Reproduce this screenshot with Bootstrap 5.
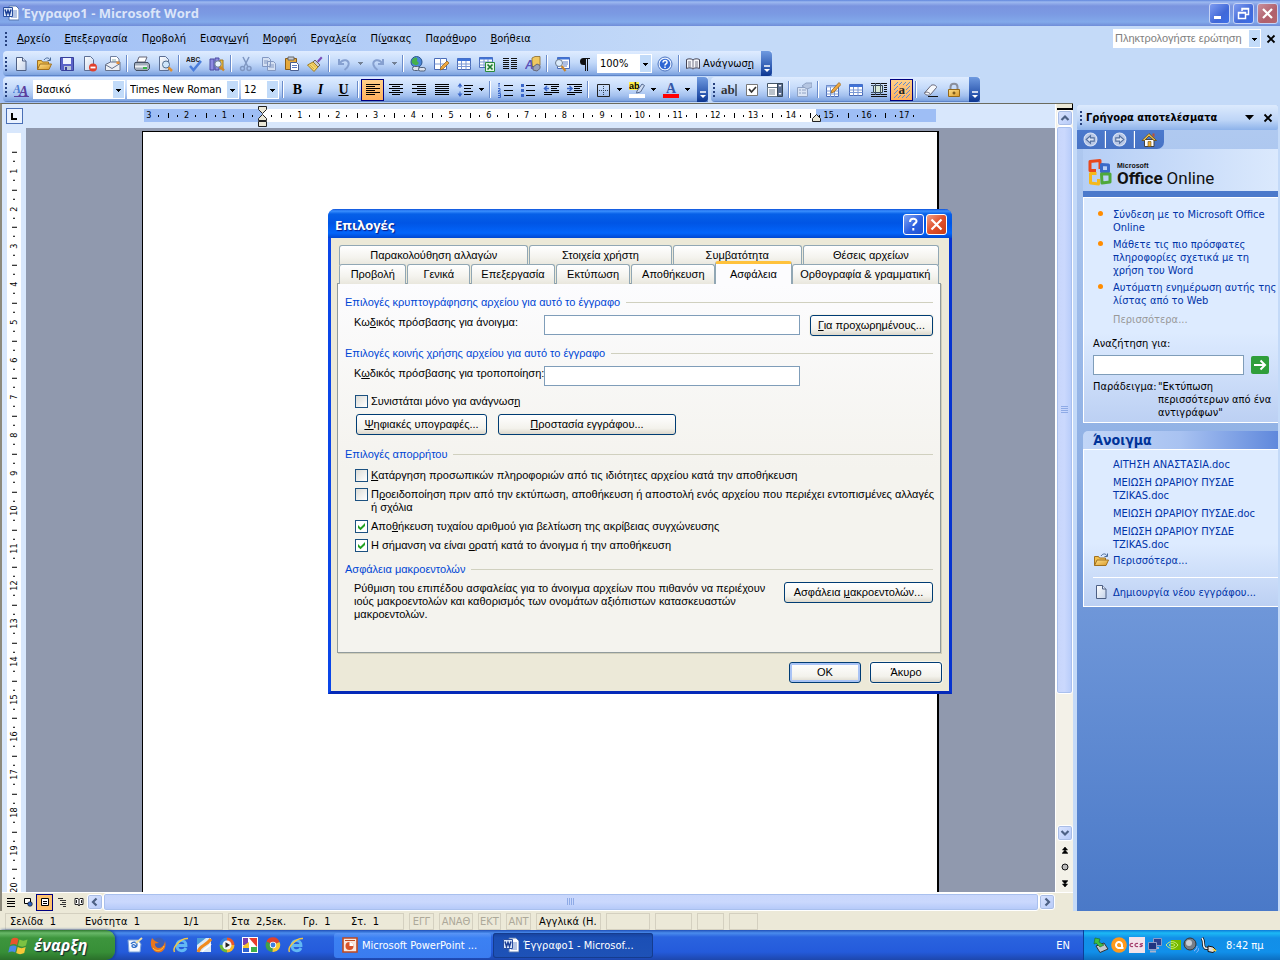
<!DOCTYPE html>
<html lang="el">
<head>
<meta charset="utf-8">
<meta name="viewport" content="width=device-width, initial-scale=1">
<title>Έγγραφο1 - Microsoft Word</title>
<link href="https://cdn.jsdelivr.net/npm/bootstrap@5.3.0/dist/css/bootstrap.min.css" rel="stylesheet">
<style>
:root{--ui:"DejaVu Sans Condensed","DejaVu Sans",sans-serif;--face:#ece9d8}
body{font:11px/13px var(--ui);color:#000;height:100vh;min-height:600px;background:#c4daf8}
button,input,select{font:inherit;color:inherit}
button{padding:0;border:0;background:none}
a{color:inherit;text-decoration:none}
u{text-underline-offset:1px}
.ico{width:16px;height:16px;display:block;flex:none}
.cap-title{font:bold 13px/16px "Open Sans","Noto Sans",sans-serif}

/* title bar */
.titlebar{height:26px;background:linear-gradient(#5f86dc,#9db9f0 2px,#7a94df 6px,#7b9ae3 14px,#82a9ea 22px,#6f8cd8);color:#dbe5f9;padding:0 2px 0 3px;gap:3px}
.winbtn{width:21px;height:21px;border:1px solid #c6d3f5;border-radius:3px;background:linear-gradient(135deg,#7f9cf0,#4068d8 60%,#3c6fe8)}
.winbtn.close-dim{background:linear-gradient(135deg,#c98f9b,#b0606c 60%,#b5656c)}
.winbtn.close-red{background:linear-gradient(135deg,#f0a088,#e0502c 50%,#c93c14);border-color:#fff}
.winbtn.help{background:linear-gradient(135deg,#7fa4f4,#2c5fe0 55%,#2052d0);border-color:#fff}

/* menus and toolbars */
.menubar{height:25px;background:linear-gradient(90deg,#a0bff5,#c4daf8 55%);padding-left:3px}
.menubar .menu{padding-left:1px}
.menubar .menu a{padding:0 7px}
.grip{width:6px;height:18px;flex:none;background:radial-gradient(circle at 3px 3px,#27417e 1px,transparent 1px) 0 0/6px 4px}
.toolrow{height:26px;background:linear-gradient(90deg,#a0bff5,#c4daf8 55%);padding-left:3px;gap:3px}
.bar{height:25px;background:linear-gradient(#dfecff,#c4dafa 45%,#a3c0ef 75%,#7da3df 95%,#4a70b8);border-radius:4px 0 0 4px}
.tb{width:23px;height:22px;display:flex;align-items:center;justify-content:center;flex:none}
.tb.on{background:linear-gradient(#ffd08a,#ffb05c);border:1px solid #000080}
.tb.txt{width:75px;gap:2px}
.tb.closedoc{width:18px}
.arr{width:11px;height:22px;flex:none}
.sep{width:2px;height:17px;margin:0 2px;flex:none;background:linear-gradient(90deg,#6a8ccb 50%,#fff 50%)}
.endcap{width:11px;align-self:stretch;border-radius:0 4px 4px 0;background:linear-gradient(#6f9ae0,#2a56ae 70%,#0c3590);display:flex;align-items:flex-end;justify-content:center;flex:none;padding-bottom:2px}
.tri{background:linear-gradient(#000,#000) 50% 9px/5px 1px no-repeat,linear-gradient(#000,#000) 50% 10px/3px 1px no-repeat,linear-gradient(#000,#000) 50% 11px/1px 1px no-repeat}
.tri.dim{opacity:.4}
.combo{appearance:none;height:19px;border:1px solid #fff;border-radius:0;padding:0 0 0 2px;margin:0 1px;background:linear-gradient(#000,#000) right 3px top 8px/5px 1px no-repeat,linear-gradient(#000,#000) right 4px top 9px/3px 1px no-repeat,linear-gradient(#000,#000) right 5px top 10px/1px 1px no-repeat,linear-gradient(#c2dbf9,#c2dbf9) right/11px 100% no-repeat,#fff;font-size:11px;flex:none}
.w55{width:55px}.w92{width:92px}.w112{width:112px}.w38{width:38px}
.combo.ask{width:148px;color:#808080;padding-left:1px;font-family:"Liberation Sans",sans-serif}
.serif{font:bold 14px/18px "Liberation Serif",serif}

/* document area */
.docarea{border-top:1px solid #6b6b5e;border-left:2px solid #8d8a7c;background:#d8e7fc;min-width:0}
.ruler{height:24px;padding-bottom:1px}
.tabsel{width:17px;height:16px;border:1px solid #4a6fb5;background:#eaf2ff;margin-left:4px}
.scale{width:793px;margin-left:107px;height:13px;font-size:9px;line-height:13px;background:linear-gradient(90deg,#d8e7fc 14px,#9ebef5 14px,#9ebef5 132px,#fff 132px,#fff 686px,#9ebef5 686px);box-shadow:13px 0 0 #9ebef5}
.scale span{flex:1 1 0;text-align:center;background:linear-gradient(#000,#000) 0 4px/1px 5px no-repeat,linear-gradient(#000,#000) 25% 6px/1px 2px no-repeat,linear-gradient(#000,#000) 75% 6px/1px 2px no-repeat}
.scale span:first-child{background-size:0 0,0 0,1px 2px}
.mark-l{left:127px;top:-4px}
.mark-r{left:681px;top:4px}
.vruler{width:24px;padding:5px 0 0 5px;overflow:hidden}
.vscale{width:14px;height:793px;background:#fff}
.vscale span{flex:1 1 0;writing-mode:vertical-rl;transform:rotate(180deg);text-align:center;line-height:14px;font-size:9px;background:linear-gradient(#000,#000) 4px 100%/5px 1px no-repeat,linear-gradient(#000,#000) 6px 25%/2px 1px no-repeat,linear-gradient(#000,#000) 6px 75%/2px 1px no-repeat}
.vscale .half{flex:.5 1 0;background:none}
.canvas{background:#9099ae;overflow:hidden}
.sheet{width:797px;margin:3px 0 0 116px;background:#fff;border:1px solid #000;border-right-width:2px;border-bottom:0}
.vscroll{width:18px;background:#f3f1e8;border-left:1px solid #fff}
.sbtn{width:16px;height:16px;flex:none;border:1px solid #fff;border-radius:3px;background:linear-gradient(135deg,#dbe5ff,#b5c9f8);box-shadow:0 0 0 1px #a9bde6 inset;display:flex;align-items:center;justify-content:center}
.thumb{border:1px solid #fff;border-radius:3px;background:linear-gradient(90deg,#c8d6fb,#cad8fd 50%,#b6cbf9);box-shadow:0 0 0 1px #a9c0ee inset}
.thumb.v{flex:568 1 0}
.track{flex:132 1 0}
.thumb.h{background:linear-gradient(#c8d6fb,#cad8fd 50%,#b3c8f8)}
.splitter{width:16px;height:6px;background:var(--face);border:1px solid #000;border-width:0 1px 2px 0}
.hrow{height:19px;background:var(--face);border-top:1px solid #fff;padding-right:18px}
.view{width:17px;height:17px;display:flex;align-items:center;justify-content:center}
.view.on{background:#ffc36e;border:1px solid #000080}
.nav-s{width:16px;height:17px;display:flex;align-items:center;justify-content:center}

/* task pane */
.pane{width:207px;border-left:4px solid #c4daf8;border-right:2px solid #c4daf8;background:linear-gradient(#b2cbf1,#8fb0e4 45%,#6f97d9 62%,#4a79c8);flex:none;margin-top:2px;white-space:nowrap}
.panehead{height:25px;background:linear-gradient(#dceafd,#bed5f7 60%,#8db2ea);border-radius:2px;font-weight:bold;padding:0 5px 0 1px}
.headtext{padding-left:2px}
.panenav{width:87px;height:19px;background:linear-gradient(#4b79cd,#4672c4);border-radius:0 0 7px 0;padding-left:6px;gap:4px}
.logo{height:48px;background:linear-gradient(90deg,#b5cef5,#dbe9fd);margin-left:6px;border-bottom:6px solid #4b79cb;padding:9px 0 0 4px}
.logotext{padding-left:4px;padding-top:4px;color:#111}
.logo .of{font:bold 17px/18px Roboto,sans-serif}
.logo .on{font:17px/18px Roboto,sans-serif}
.logo .ms{font:bold 7px/7px "Liberation Sans",sans-serif}
.sect{margin-left:6px;border:1px solid #fff;border-right:0;background:linear-gradient(#ddebff 60%,#bcd0f3)}
.sect.online{padding:10px 9px 3px}
.sect.recent{padding:8px 0 6px 9px}
.links{color:#0033a8}
.sect ul{padding-left:20px;margin:0}
.bul li{position:relative;margin-bottom:4px}
.bul li::before{content:"";position:absolute;left:-15px;top:3px;width:5px;height:5px;border-radius:50%;background:#ff8c00}
.more{padding:2px 0 11px 20px;color:#999}
.find{height:20px;border:1px solid #7f9db9;background:#fff;width:153px}
.gap7{gap:7px}
.exlab{width:65px;flex:none}
.opentitle{margin:8px 0 0 6px;height:18px;background:linear-gradient(90deg,#c2d6f7,#a8c2f1 50%,#5f88dc);border-radius:5px 0 0 0;color:#003399;font:bold 14px/19px "DejaVu Sans Condensed",sans-serif;padding-left:10px}
.recent li+li{margin-top:5px}
.filelink{gap:4px;padding-top:1px}
.filelink+.filelink{margin-top:9px;padding-top:6px;border-top:1px solid #fff}

/* status bar */
.status{height:19px;background:var(--face);padding:1px 0 0 5px;gap:5px}
.cell{height:17px;border:1px solid #d4d0c0;line-height:16px;padding:0 4px;flex:none;white-space:pre}
.cell.off{color:#aca899;padding:0;text-align:center}
.cell.pos{padding-left:2px}
.cell.lang{width:65px;padding:0 2px}
.w218{width:218px}.w176{width:176px}.w75{width:75px}.w98{width:98px}.w48{width:48px}
.w25{width:25px}.w34{width:34px}.w23{width:23px}.w44{width:44px}.w37{width:37px}.w27{width:27px}.w29{width:29px}

/* taskbar */
.taskbar{height:30px;background:linear-gradient(#1f4fb8,#4a8cec 3px,#2a63df 7px,#245bdb 22px,#1d47ad);color:#fff}
.start{width:115px;height:30px;background:linear-gradient(#2f7a2f,#68b868 3px,#3d953d 8px,#378f37 22px,#2a6f2a);border-radius:0 9px 9px 0;box-shadow:1px 0 3px #123b8c;padding-left:8px;gap:4px;font:italic bold 16px/20px "Open Sans",sans-serif;text-shadow:1px 1px 1px #123}
.quick{padding-left:8px}
.tasks{padding-left:27px;gap:2px}
.task{height:25px;border-radius:3px;background:linear-gradient(#5b96f5,#3c81f3 5px,#3a7cf0);padding-left:8px;gap:4px;color:#fff;white-space:nowrap;text-align:left}
.task.on{background:linear-gradient(#17429c,#1b4fb5 5px,#1e52b7);box-shadow:0 0 0 1px #153c8e inset;padding-left:10px}
.w157{width:157px}.w160{width:160px}
.lang-ind{padding-right:13px}
.tray{width:197px;background:linear-gradient(#0d7ad8,#1cb9f5 3px,#128fe8 8px,#1190ea 22px,#0c6ec0);border-left:1px solid #0b3f99;padding-left:9px;gap:2px}
.clock{padding-left:7px}

/* options dialog */
.dlg{top:209px;width:624px;background:var(--face);border:3px solid #0831d9;border-top:0;border-radius:8px 8px 0 0;border-color:#0a46e8 #0633d0 #0429b8 #0a46e8;font-family:"Liberation Sans",sans-serif}
.dlghead{height:29px;margin:0 -3px;padding:2px 5px 0 7px;border-radius:7px 7px 0 0;background:linear-gradient(#0a4fd8,#3b90ff 2px,#0660e8 5px,#0055e5 14px,#0265fb 24px,#0047d0);color:#fff;text-shadow:1px 1px 1px #0a1883;gap:2px}
.tabs{margin:-1px 10px 0 8px;gap:1px}
.tabs.back{margin-top:7px}
.tab{height:20px;border:1px solid #91a7b4;border-bottom:0;border-radius:3px 3px 0 0;background:linear-gradient(#fff,#f4f3ee 60%,#e9e7dd);text-align:center;line-height:19px;white-space:nowrap}
.tab.on{height:23px;margin:-3px -1px 0;border-top:3px solid #ffc23c;background:#fcfcfe;position:relative}
.f62{flex:62 1 0}.f67{flex:67 1 0}.f74{flex:74 1 0}.f76{flex:76 1 0}.f84{flex:84 1 0}.f129{flex:129 1 0}.f136{flex:136 1 0}.f142{flex:142 1 0}.f149{flex:149 1 0}.f190{flex:190 1 0}
.panel{margin:-1px 8px 0 6px;border:1px solid #919b9c;background:linear-gradient(#fcfcfe,#f4f3ee 50%);height:370px;padding:11px 7px 0 7px;box-shadow:1px 1px 0 #d0ceba;white-space:nowrap}
.lg{color:#0046d5;display:flex;align-items:center;gap:6px;font-size:11px;line-height:14px;margin:10px 0 0}
.lg:first-child{margin-top:0}
.lg.far{margin-top:12px}
.lg::after{content:"";flex:1;height:1px;background:#d0d0bf}
.fld{padding-left:9px}
.pw{height:20px;border:1px solid #7f9db9;background:#fff;width:256px;border-radius:0}
.lab{width:190px;padding-top:1px}
.xp{height:21px;border:1px solid #003c74;border-radius:3px;background:linear-gradient(#fff,#f3f2ec 70%,#dcd8cc);box-shadow:0 0 0 1px #f6f4ea;white-space:nowrap}
.xp.def{box-shadow:0 0 0 2px #a9c3f5 inset}
.w123{width:123px}.w131{width:131px}.w178{width:178px}.w149{width:149px}.w72{width:72px}
.ck{appearance:none;width:13px;height:13px;border:1px solid #1c5180;background:linear-gradient(135deg,#dcdcd7,#fff);flex:none;margin:0}
.ck:checked{background:url("data:image/svg+xml,%3Csvg xmlns='http://www.w3.org/2000/svg' viewBox='0 0 11 11'%3E%3Cpath d='M2 4l2.500 2.500L9 2v3L4.500 9.300 2 7z' fill='%2321a121'/%3E%3C/svg%3E") center/11px 11px,#fff}
.ckrow{display:flex;gap:3px;padding-left:10px;margin-top:6px}
.ckrow.first{margin-top:9px}
.lg+.ckrow{margin-top:8px}
.btnpair{padding-left:11px;gap:11px}
.dlgfoot{gap:9px;padding:9px 7px 8px}
.g5{margin-top:5px}.g6{margin-top:6px}
</style>
</head>
<body class="d-flex flex-column overflow-hidden position-relative">

<svg width="0" height="0" class="position-absolute" aria-hidden="true">
<defs>
<linearGradient id="gp" x2="1" y2="1"><stop stop-color="#fff"/><stop offset="1" stop-color="#c5d3ea"/></linearGradient>
<linearGradient id="gy" x2="1" y2="1"><stop stop-color="#ffe08a"/><stop offset="1" stop-color="#d99a2b"/></linearGradient>
<symbol id="i-word" viewBox="0 0 16 16"><path d="M6 1h7l3 3v11H6z" fill="#fff" stroke="#5878b0"/><path d="M10 6h4M10 8h4M10 10h4M8 12h6" stroke="#6a8ac8"/><path d="M.5 2.500h9v9h-9z" fill="#dce8fb" stroke="#2a4fa0"/><path d="M2 4.500l1.500 5L5 5.500l1.500 4L8 4.500" fill="none" stroke="#1c3f95" stroke-width="1.500"/></symbol>
<symbol id="i-new" viewBox="0 0 16 16"><path d="M3.500 1.500h6l3.500 3.500v9.500H3.500z" fill="url(#gp)" stroke="#4d5f84"/><path d="M9.500 1.500V5H13" fill="#dfe8f8" stroke="#4d5f84"/></symbol>
<symbol id="i-open" viewBox="0 0 16 16"><path d="M1.500 13.500v-9h4l1 1.500h6v2" fill="#f2c14e" stroke="#a07020"/><path d="M1.500 13.500L4 8h11.500L13 13.500z" fill="url(#gy)" stroke="#a07020"/><path d="M8 4c2-3 5-2.500 6 0M14.500 1.500V4.500H11.500" fill="none" stroke="#4a6a98"/></symbol>
<symbol id="i-save" viewBox="0 0 16 16"><path d="M1.500 1.500h13v13h-12l-1-1z" fill="#5a62c8" stroke="#37409a"/><path d="M4 2h8v6H4z" fill="#eef2ff"/><path d="M5 10h7v4H5z" fill="#b8c4d8"/><path d="M6 11h2v3H6z" fill="#37409a"/></symbol>
<symbol id="i-perm" viewBox="0 0 16 16"><path d="M2.500.500h6l3 3v11h-9z" fill="url(#gp)" stroke="#5d6f94"/><circle cx="11" cy="11.500" r="4" fill="#e0402c"/><path d="M8.500 11.500h5" stroke="#fff" stroke-width="1.800"/></symbol>
<symbol id="i-mail" viewBox="0 0 16 16"><path d="M5.500.500h6l2.500 2.500v6H5.500z" fill="#fff" stroke="#7080a0"/><path d="M7 4h4M7 6h5" stroke="#8aa"/><path d="M.500 8.500l5-2.500h9.500v8.500H.500z" fill="#eceff5" stroke="#66728c"/><path d="M1 9l6 3.500 8-5" fill="none" stroke="#66728c"/><path d="M11.500 5.500h3v2.500h-3z" fill="#e8913a"/></symbol>
<symbol id="i-print" viewBox="0 0 16 16"><path d="M5 1h8l-2 5H3z" fill="#fff" stroke="#667"/><path d="M1 6.500h13l1.500 2v4l-2 2H2l-1.500-2V8z" fill="#a3adbb" stroke="#445064"/><path d="M1 9.500h12v2H1z" fill="#eef1f5"/><path d="M9 11h4v2H9z" fill="#39b54a"/></symbol>
<symbol id="i-prev" viewBox="0 0 16 16"><path d="M2.500.500h6l3 3v11h-9z" fill="url(#gp)" stroke="#5d6f94"/><circle cx="9" cy="8.500" r="3.500" fill="#cfe6fb" stroke="#55708f"/><path d="M11.500 11.500L15 15" stroke="#e09030" stroke-width="2.500"/></symbol>
<symbol id="i-spell" viewBox="0 0 16 16"><text x="0" y="6" font-size="6.500" font-weight="bold" font-family="Liberation Sans" fill="#222">ABC</text><path d="M4 10l3.500 4L15 5" fill="none" stroke="#4a7ddb" stroke-width="2.500"/></symbol>
<symbol id="i-res" viewBox="0 0 16 16"><path d="M1 3h4v11H1zM6 2h4v12H6z" fill="#8d8ae0" stroke="#4a4aa0"/><path d="M11 4h3v9h-3z" fill="#f0c040" stroke="#a07820"/><circle cx="9" cy="8" r="3.200" fill="#e8f3fd" stroke="#6a7a90"/><path d="M11 10.500l4 4" stroke="#d08828" stroke-width="2.400"/></symbol>
<symbol id="i-cut" viewBox="0 0 16 16"><g fill="none" stroke="#7f97c2" stroke-width="1.500"><path d="M5 1l5 10M11 1L6 11"/><circle cx="4.500" cy="12.500" r="2"/><circle cx="11" cy="12.500" r="2"/></g></symbol>
<symbol id="i-copy" viewBox="0 0 16 16"><g fill="#d5e0f2" stroke="#8398c2"><path d="M1.500 1.500h6l2 2v7h-8zM6.500 5.500h6l2 2v7h-8z"/><path d="M3 5h4M3 7h3M8 9h5M8 11h5"/></g></symbol>
<symbol id="i-paste" viewBox="0 0 16 16"><path d="M1.500 2.500h11v11h-11z" fill="#e5a93c" stroke="#8a5c18"/><path d="M4 1h6v3H4z" fill="#c8ccd4" stroke="#666"/><path d="M6.500 6.500h6l2 2v6h-8z" fill="#fff" stroke="#4a5f90"/><path d="M8 9.500h5M8 11.500h5" stroke="#5a78c0"/></symbol>
<symbol id="i-brush" viewBox="0 0 16 16"><path d="M10 5l4-4.500 1.500 1.500-4 4.500z" fill="#7a4cb8"/><path d="M8 4l5 5-2 2-5-5z" fill="#c8c8d4" stroke="#666"/><path d="M6 6l5 5-4 4.500L.500 9z" fill="#f5d56a" stroke="#a07c20"/><path d="M3 9l4 4M5 7.500l4 4" stroke="#c09838" stroke-width=".7"/></symbol>
<symbol id="i-undo" viewBox="0 0 16 16"><path d="M3 3v5h5M3.500 7.500C7 2 14 4 12.500 9c-.5 2-2 3.500-4 5" fill="none" stroke="#86a0d0" stroke-width="2"/></symbol>
<symbol id="i-redo" viewBox="0 0 16 16"><path d="M13 3v5H8M12.500 7.500C9 2 2 4 3.500 9c.5 2 2 3.500 4 5" fill="none" stroke="#86a0d0" stroke-width="2"/></symbol>
<symbol id="i-link" viewBox="0 0 16 16"><circle cx="6.500" cy="6" r="5.500" fill="#4a86d8" stroke="#2a558f"/><path d="M2 4c2-3 4-3 5-2s-1 3 1 4-1 4-3 3S1 7 2 4z" fill="#46b04a"/><rect x="2.500" y="10.500" width="7" height="4" rx="2" fill="#dce3ee" stroke="#53627c"/><rect x="8.500" y="11.500" width="7" height="3.500" rx="1.700" fill="#dce3ee" stroke="#53627c"/></symbol>
<symbol id="i-tbl" viewBox="0 0 16 16"><path d="M1.500 2.500h13v11h-13z" fill="#fff" stroke="#4a6cb8"/><path d="M1.500 2.500h13v2.500h-13z" fill="#3f73d8"/><path d="M1.500 8h13M1.500 10.500h13M5.500 5v8.500M10 5v8.500" stroke="#7a98d4"/></symbol>
<symbol id="i-tbb" viewBox="0 0 16 16"><path d="M1.500 2.500h12v11h-12z" fill="#fff" stroke="#4a6cb8"/><path d="M1.500 8h12M7.500 2.500v11" stroke="#7a98d4"/><path d="M7 14l1-3 6-6 2 2-6 6z" fill="#f0a840" stroke="#8a5c18" stroke-width=".7"/></symbol>
<symbol id="i-tdr" viewBox="0 0 16 16"><path d="M1.500 3.500h12v11h-12z" fill="#fff" stroke="#4a6cb8"/><path d="M1.500 3.500h12v2h-12z" fill="#9db8e8"/><path d="M1.500 9h12M1.500 12h12M5.500 5v10M9.500 5v10" stroke="#7a98d4"/><path d="M6 11l1-3 7-7.500L16 2.500l-7 7.500z" fill="#f0a840" stroke="#8a5c18" stroke-width=".7"/></symbol>
<symbol id="i-xls" viewBox="0 0 16 16"><path d="M.500 1.500h13v10h-13z" fill="#fff" stroke="#4a6cb8"/><path d="M.500 1.500h13v2h-13z" fill="#3f73d8"/><path d="M.500 6h13M.500 9h13M5 3v8M9 3v8" stroke="#7a98d4"/><path d="M6.500 6.500h9v9h-9z" fill="#e4f5e4" stroke="#2b8a3a"/><path d="M8.500 8.500l5 5M13.500 8.500l-5 5" stroke="#1d7a30" stroke-width="1.700"/></symbol>
<symbol id="i-cols" viewBox="0 0 16 16"><path d="M1 2.500h6M1 4.500h6M1 6.500h6M1 8.500h6M1 10.500h6M1 12.500h6M9 2.500h6M9 4.500h6M9 6.500h6M9 8.500h6M9 10.500h6M9 12.500h6" stroke="#111"/></symbol>
<symbol id="i-draw" viewBox="0 0 16 16"><path d="M7 2l3-1.500h5V9l-2 1.500H7z" fill="#f0c860" stroke="#8c6a2a" stroke-width=".8"/><path d="M8 11l4-3 3 1.500v3L12 15l-4-1z" fill="#98a2bc" stroke="#667"/><text x="0" y="13" font-size="12" font-weight="bold" font-style="italic" font-family="Liberation Sans" fill="#5b52b8">A</text></symbol>
<symbol id="i-map" viewBox="0 0 16 16"><path d="M3.500 1.500h12v11h-12z" fill="#fff" stroke="#4a6cb8"/><path d="M3.500 1.500h12v2h-12z" fill="#3f73d8"/><path d="M9 6h5M9 8h5M9 10h4" stroke="#5a7cc4"/><circle cx="5" cy="7" r="3.500" fill="#dcecfb" stroke="#6a7a90"/><path d="M7.500 10l4 5" stroke="#c8862c" stroke-width="2.200"/></symbol>
<symbol id="i-para" viewBox="0 0 16 16"><path d="M13 2H6.500a3.500 3.500 0 0 0 0 7H8v6h1V3h1v12h1V3h2z" fill="#111"/></symbol>
<symbol id="i-help" viewBox="0 0 16 16"><circle cx="8" cy="8" r="7" fill="#eaf2ff" stroke="#4c74c0"/><circle cx="8" cy="8" r="5.300" fill="#2f66d4"/><path d="M6 6.500c0-3 4.500-2.500 4 0C9.700 8 8 7.800 8 9.500M8 10.500v1.500" fill="none" stroke="#fff" stroke-width="1.500"/></symbol>
<symbol id="i-book" viewBox="0 0 16 16"><path d="M1.500 3.500c2-1 5-1 6.500.5 1.500-1.500 4.500-1.500 6.500-.5v9c-2-1-5-1-6.500.5-1.500-1.500-4.500-1.500-6.500-.5z" fill="#f5f7fb" stroke="#445"/><path d="M8 4v9M3 6h3M3 8h3M3 10h3M10 6h3M10 8h3M10 10h3" stroke="#778"/></symbol>
<symbol id="i-more" viewBox="0 0 8 10"><path d="M1 2h6" stroke="#fff" stroke-width="1.500"/><path d="M1 5h6L4 8z" fill="#fff"/></symbol>
<symbol id="i-aa" viewBox="0 0 16 16"><g font-family="Liberation Serif" font-weight="bold" font-style="italic"><text x="0" y="11" font-size="12" fill="#4a7ad0">A</text><text x="6" y="14" font-size="14" fill="#5a3f9c">A</text></g><path d="M1 14.500h15" stroke="#5a3f9c"/></symbol>
<symbol id="i-al" viewBox="0 0 16 16"><path d="M1 2.500h14M1 4.500h9M1 6.500h14M1 8.500h9M1 10.500h14M1 12.500h9" stroke="#000"/></symbol>
<symbol id="i-ac" viewBox="0 0 16 16"><path d="M1 2.500h14M4 4.500h8M1 6.500h14M4 8.500h8M1 10.500h14M4 12.500h8" stroke="#000"/></symbol>
<symbol id="i-ar" viewBox="0 0 16 16"><path d="M1 2.500h14M6 4.500h9M1 6.500h14M6 8.500h9M1 10.500h14M6 12.500h9" stroke="#000"/></symbol>
<symbol id="i-aj" viewBox="0 0 16 16"><path d="M1 2.500h14M1 4.500h14M1 6.500h14M1 8.500h14M1 10.500h14M1 12.500h14" stroke="#000"/></symbol>
<symbol id="i-ls" viewBox="0 0 16 16"><path d="M7 3.500h9M7 6.500h7M7 9.500h9M7 12.500h7" stroke="#000"/><path d="M3 2v4M3 9.500v4" stroke="#3a66c8"/><path d="M.500 4.500L3 1l2.500 3.500zM.500 11.500L3 15l2.500-3.500z" fill="#3a66c8"/></symbol>
<symbol id="i-num" viewBox="0 0 16 16"><path d="M7 3.500h9M7 8.500h9M7 13.500h9" stroke="#000"/><path d="M2 1v4M1.500 1.500H3M1 6.500h2v2H1.500V10H4M1 11.500h2.500v4H1M1 13.500h2" fill="none" stroke="#3a66c8"/></symbol>
<symbol id="i-bul" viewBox="0 0 16 16"><path d="M6 3.500h9M6 8.500h9M6 13.500h9" stroke="#000"/><path d="M1 2h3v3H1zM1 7h3v3H1zM1 12h3v3H1z" fill="#3a66c8"/></symbol>
<symbol id="i-od" viewBox="0 0 16 16"><path d="M1 2.500h15M8 4.500h8M8 6.500h6M8 8.500h8M1 10.500h15M1 12.500h8" stroke="#000"/><path d="M6 6.500H1.500M4 4L1.500 6.500 4 9" fill="none" stroke="#3a66c8" stroke-width="1.500"/></symbol>
<symbol id="i-in" viewBox="0 0 16 16"><path d="M1 2.500h15M8 4.500h8M8 6.500h6M8 8.500h8M1 10.500h15M1 12.500h8" stroke="#000"/><path d="M1 6.500h5M3.500 4L6 6.500 3.500 9" fill="none" stroke="#3a66c8" stroke-width="1.500"/></symbol>
<symbol id="i-bord" viewBox="0 0 16 16"><path d="M2.500 2.500h12v12h-12z" fill="none" stroke="#222"/><path d="M4 8.500h9M8.500 4v9" stroke="#345" stroke-dasharray="1 1"/></symbol>
<symbol id="i-hl" viewBox="0 0 16 16"><path d="M0 0h10v8H0z" fill="#fff04a"/><text x="0" y="7" font-size="9" font-weight="bold" font-family="Liberation Sans">ab</text><path d="M8 9l5-7 2.500 1.500-4 6.500-4 1z" fill="#cfdcf2" stroke="#556a90"/><path d="M0 12h16v4H0z" fill="#fff"/></symbol>
<symbol id="i-fc" viewBox="0 0 16 16"><text x="3" y="11" font-size="14" font-weight="bold" font-family="Liberation Serif" fill="#3558a8">A</text><path d="M0 12h16v4H0z" fill="#f00"/></symbol>
<symbol id="i-ab" viewBox="0 0 16 16"><text x="0" y="12" font-size="13" font-weight="bold" font-family="Liberation Serif" fill="#333">ab</text><path d="M15 2v12" stroke="#000"/></symbol>
<symbol id="i-ckb" viewBox="0 0 16 16"><path d="M2.500 2.500h11v11h-11z" fill="#fff" stroke="#777"/><path d="M5 7l2.500 3L12 5" fill="none" stroke="#333" stroke-width="1.700"/></symbol>
<symbol id="i-dd" viewBox="0 0 16 16"><path d="M.500 1.500h15v4h-15z" fill="#fff" stroke="#456"/><path d="M.500 5.500h10v9h-10z" fill="#fff" stroke="#678"/><path d="M10.500 1.500h5v13h-5z" fill="#5a6e90" stroke="#345"/><path d="M2 8h6M2 10h6M2 12h6" stroke="#789"/><path d="M11.500 3h3L13 5zM11.500 11h3L13 13z" fill="#fff"/></symbol>
<symbol id="i-prop" viewBox="0 0 16 16"><path d="M1.500 5.500h10v9h-10z" fill="#dbe5f5" stroke="#8fa2c4"/><path d="M3 8h2M6 8h4M3 11h2M6 11h4" stroke="#8fa2c4"/><path d="M6 4l4-3h6v4l-5 2z" fill="#b5c6e2" stroke="#8fa2c4"/></symbol>
<symbol id="i-frame" viewBox="0 0 16 16"><path d="M0 1.500h16M0 14.500h16M0 12.500h16M13 3.500h3M13 5.500h3M13 7.500h3M13 9.500h3" stroke="#111"/><path d="M2.500 3.500h9v7h-9z" fill="#d9ead9" stroke="#345"/><path d="M0 3.500h2M0 10.500h2M4.500 1v12M9.500 1v12" stroke="#456"/></symbol>
<symbol id="i-shade" viewBox="0 0 16 16"><path d="M0 4l4-4M0 8l8-8M0 12L12 0M0 16L16 0M4 16L16 4M8 16l8-8M12 16l4-4" stroke="#5f8ad0"/><path d="M4 3h8v10H4z" fill="#ffc27a"/><text x="4.500" y="12" font-size="13" font-weight="bold" font-family="Liberation Serif" fill="#222">a</text></symbol>
<symbol id="i-erase" viewBox="0 0 16 16"><path d="M1.500 11L8 3.500c2-1.500 6 0 5.500 2L7.500 12.500c-2 1.500-6 0-6-1.500z" fill="#f6f8fc" stroke="#667"/><path d="M1.500 11c1-1.500 5-1 6 1.500" fill="none" stroke="#667"/><path d="M5 14.500h10" stroke="#111"/></symbol>
<symbol id="i-lock" viewBox="0 0 16 16"><path d="M4.500 8V5c0-4.500 7-4.500 7 0v3" fill="none" stroke="#8a8f9c" stroke-width="2"/><path d="M2.500 7.500h11v7h-11z" fill="url(#gy)" stroke="#94681a"/><path d="M8 9.500v3M6.500 11h3" stroke="#5a3c08"/></symbol>
<symbol id="i-x" viewBox="0 0 10 10"><path d="M1.500 1.500l7 7M8.500 1.500l-7 7" stroke="currentColor" stroke-width="1.800"/></symbol>
<symbol id="i-home" viewBox="0 0 16 16"><path d="M3.500 7.500h9.500v7H3.500z" fill="#fff" stroke="#444"/><path d="M8 1.500L1 8.500h2.500L8 4l5 4.500h2.500z" fill="#f4c850" stroke="#6a4c10" stroke-width=".8"/><path d="M11.500 1.500h2v4l-2-2z" fill="#c05030"/><path d="M7 9.500h3v5H7z" fill="#f0b030" stroke="#6a4c10" stroke-width=".6"/></symbol>
<symbol id="i-lt" viewBox="0 0 14 14"><circle cx="7" cy="7" r="6" fill="#b9c8e6" stroke="#dbe4f5"/><path d="M3 7l4-3.500v2h3.500v3H7v2z" fill="#dbe4f5" stroke="#54709f"/></symbol>
<symbol id="i-rt" viewBox="0 0 14 14"><circle cx="7" cy="7" r="6" fill="#b9c8e6" stroke="#dbe4f5"/><path d="M11 7L7 3.500v2H3.500v3H7v2z" fill="#dbe4f5" stroke="#54709f"/></symbol>
<symbol id="i-off" viewBox="0 0 26 28"><g fill="none" stroke-width="3" stroke-linejoin="round"><path d="M13 11V2.500L3 3.500v9h6" stroke="#e8481c"/><path d="M14.500 6.500l7 .5v6.500h-7z" stroke="#3a6ac8"/><path d="M9.500 15.500H3.500v9.500l8 1v-5" stroke="#f5b81c"/><path d="M14.500 16h8.500v8l-8 1z" stroke="#4ea83c"/></g></symbol>
<symbol id="i-flag" viewBox="0 0 22 20"><path d="M3.500 4c2.500-2 5-1.500 7 0L9 10C7 8.500 5 8.500 2 10z" fill="#e8552c"/><path d="M11.500 4.500c2.500 1.500 5 1.500 8 0L18 10.500c-2.500 1.500-5 1.500-8 0z" fill="#7cc242"/><path d="M1.700 11.500c2.600-1.500 5-1.500 7 0L7.200 17.500C5 16 3 16 .2 17.500z" fill="#4a8ae8"/><path d="M9.700 12c2.500 1.500 5 1.500 8 0l-1.500 6c-3 1.500-5.500 1.500-8 0z" fill="#f8c838"/></symbol>
<symbol id="i-desk" viewBox="0 0 16 16"><path d="M1 3h10l3 4-1 8H2z" fill="#f4f8ff" stroke="#7aa0d8"/><path d="M4 7c2-3 6-2 6 1s-5 3-5 1 3-2 4 1" fill="none" stroke="#2e6ec8" stroke-width="1.300"/><path d="M9 6l6-5" stroke="#f0e0a0" stroke-width="2"/></symbol>
<symbol id="i-ff" viewBox="0 0 16 16"><circle cx="8.500" cy="6.500" r="6" fill="#3a5fb8"/><path d="M1 4c-1 7 3 11.500 7.500 11.500S17 11 15 4c-.5 4-3 7-6 7s-4.500-2.500-4-4.500L9 6 5 4 2 1z" fill="#e8761c"/><path d="M3 11c3 4 9 3 11-2" stroke="#ffc23c" fill="none"/></symbol>
<symbol id="i-ie" viewBox="0 0 16 16"><path d="M13 11c-2 4-9 4-9-2.500S13 2 13 8.500H5" fill="none" stroke="#62b8f4" stroke-width="2.800"/><path d="M1.500 15C-1 10 8 1 15 1.500" fill="none" stroke="#f2c744" stroke-width="1.500"/></symbol>
<symbol id="i-pen" viewBox="0 0 16 16"><path d="M1 1h14v14H1z" fill="#dbe9f6"/><path d="M1 1h9L1 8z" fill="#4a9ad8"/><path d="M2 15C4 8 9 10 15 2" fill="none" stroke="#f08a1c" stroke-width="3"/><path d="M6 15c2-4 6-4 9-8" fill="none" stroke="#fff" stroke-width="1.500"/></symbol>
<symbol id="i-wmp" viewBox="0 0 16 16"><path d="M8 .500A7.500 7.500 0 0 0 .500 8H8z" fill="#3a82d8"/><path d="M8 .500A7.500 7.500 0 0 1 15.500 8H8z" fill="#e8582c"/><path d="M.500 8A7.500 7.500 0 0 0 8 15.500V8z" fill="#6ab83c"/><path d="M15.500 8A7.500 7.500 0 0 1 8 15.500V8z" fill="#f4b82c"/><circle cx="8" cy="8" r="4.500" fill="#f4f7fb"/><path d="M6.500 5.300L11 8l-4.500 2.700z" fill="#222"/></symbol>
<symbol id="i-pic" viewBox="0 0 16 16"><path d="M0 0h16v16H0z" fill="#fff"/><path d="M1 1h5v7H1z" fill="#7a3fb0"/><path d="M7 1h8v9z" fill="#e83c2c"/><path d="M1 9l6-4v10H1z" fill="#f8c62c"/><path d="M1 11h6v4H1z" fill="#2f62d0"/><path d="M9 10h6v5H9z" fill="#3fb04a"/></symbol>
<symbol id="i-chr" viewBox="0 0 16 16"><path d="M8 8L1.500 4.500A7 7 0 0 1 14.500 5z" fill="#e0432c"/><path d="M8 8L1.500 4.500A7 7 0 0 0 7.500 15z" fill="#43a047"/><path d="M8 8l6.500-3A7 7 0 0 1 7.500 15z" fill="#f9cb32"/><circle cx="8" cy="8" r="3.200" fill="#fff"/><circle cx="8" cy="8" r="2.400" fill="#3f7fe0"/></symbol>
<symbol id="i-ppt" viewBox="0 0 16 16"><path d="M1 1h14v14H1z" fill="#fbe7de" stroke="#c04a20" stroke-width="1.600"/><circle cx="7.500" cy="9" r="4" fill="#d9532a"/><path d="M7.500 9V5a4 4 0 0 1 4 4z" fill="#fff"/><path d="M3 3.500h10" stroke="#c04a20"/></symbol>
<symbol id="i-usb" viewBox="0 0 16 16"><path d="M3 9l8-3 4 6-8 3.500z" fill="#c3c8ce" stroke="#333"/><path d="M2 1l5 1-1 3 5 3-4 2-4-4-2 1z" fill="#3fc043" stroke="#1a6a20" stroke-width=".6"/></symbol>
<symbol id="i-av" viewBox="0 0 16 16"><circle cx="8" cy="8" r="7.800" fill="#ff9a1c"/><path d="M11 11V8a3 3 0 1 0-2 2.900h3.500" fill="none" stroke="#fff" stroke-width="2"/></symbol>
<symbol id="i-ccs" viewBox="0 0 16 16"><path d="M0 0h16v16H0z" fill="#f3e3ea"/><path d="M4 6.500c-4-1-4 4 0 3M9 6.500c-4-1-4 4 0 3M14 6.500c-4 0-3 1.500-1.500 1.500s1 2-2 1.500" fill="none" stroke="#a23a6a" stroke-width="1.200"/></symbol>
<symbol id="i-net" viewBox="0 0 16 16"><path d="M6.500 1.500h8v7h-8z" fill="#2a3f90" stroke="#8b9cc8"/><path d="M1.500 5.500h8v7h-8z" fill="#1f3480" stroke="#8b9cc8"/><path d="M3 14.500h6M11 10v2" stroke="#a8b4d0" stroke-width="2"/></symbol>
<symbol id="i-nv" viewBox="0 0 16 16"><path d="M6 3h10v10H6z" fill="#76b900"/><path d="M1 8c4-5 9-4 12 0-3 4-8 5-12 0zM4 8c2-2 4-2 6 0-2 2-4 2-6 0z" fill="none" stroke="#c8f078"/></symbol>
<symbol id="i-vol" viewBox="0 0 16 16"><circle cx="7" cy="7" r="6" fill="#777e88" stroke="#333"/><circle cx="6" cy="6" r="3" fill="#c8cdd4"/><path d="M11 14c2-1 3-3 3-5M13.500 15.500c1.500-1 2.500-3 2.500-4.500" fill="none" stroke="#9ab8ff"/></symbol>
<symbol id="i-plug" viewBox="0 0 16 16"><path d="M1 1c3 4 0 7 3 10l6 1" fill="none" stroke="#111" stroke-width="3"/><path d="M1 1c3 4 0 7 3 10l6 1" fill="none" stroke="#f4f4f4" stroke-width="1.500"/><path d="M7 9l5 1 3 3-3 2.500-5-1z" fill="#ddd" stroke="#111"/><path d="M12 12l3 2" stroke="#f0d040" stroke-width="2"/></symbol>
</defs>
</svg>

<header class="titlebar d-flex align-items-center flex-shrink-0">
  <svg class="ico"><use href="#i-word"/></svg>
  <span class="cap-title flex-grow-1">Έγγραφο1 - Microsoft Word</span>
  <button class="winbtn" aria-label="Ελαχιστοποίηση"><svg width="19" height="19" class="d-block"><path d="M4 13.500h7" stroke="#fff" stroke-width="3"/></svg></button>
  <button class="winbtn" aria-label="Επαναφορά"><svg width="19" height="19" class="d-block"><path d="M4.500 8.500h7v6h-7zM4 9h8M8 7V4.500h6.500v6H12M8 5h7" fill="none" stroke="#fff" stroke-width="1.500"/></svg></button>
  <button class="winbtn close-dim" aria-label="Κλείσιμο"><svg width="19" height="19" class="d-block"><path d="M5 5l9 9M14 5l-9 9" stroke="#fff" stroke-width="2.200"/></svg></button>
</header>

<nav class="menubar d-flex align-items-center flex-shrink-0">
  <span class="grip"></span>
  <div class="menu d-flex flex-grow-1">
    <a href="#"><u>Α</u>ρχείο</a><a href="#"><u>Ε</u>πεξεργασία</a><a href="#">Π<u>ρ</u>οβολή</a><a href="#">Εισαγ<u>ω</u>γή</a><a href="#"><u>Μ</u>ορφή</a><a href="#">Εργα<u>λ</u>εία</a><a href="#">Πί<u>ν</u>ακας</a><a href="#">Παρά<u>θ</u>υρο</a><a href="#"><u>Β</u>οήθεια</a>
  </div>
  <select class="combo ask" aria-label="Ερώτηση"><option>Πληκτρολογήστε ερώτηση</option></select>
  <button class="tb closedoc" aria-label="Κλείσιμο εγγράφου"><svg width="10" height="10"><use href="#i-x"/></svg></button>
</nav>

<div class="toolrow d-flex flex-shrink-0">
  <div class="bar d-flex align-items-center">
    <span class="grip"></span>
    <button class="tb" aria-label="Νέο"><svg class="ico"><use href="#i-new"/></svg></button>
    <button class="tb" aria-label="Άνοιγμα"><svg class="ico"><use href="#i-open"/></svg></button>
    <button class="tb" aria-label="Αποθήκευση"><svg class="ico"><use href="#i-save"/></svg></button>
    <button class="tb" aria-label="Δικαιώματα"><svg class="ico"><use href="#i-perm"/></svg></button>
    <button class="tb" aria-label="Ηλεκτρονικό ταχυδρομείο"><svg class="ico"><use href="#i-mail"/></svg></button>
    <span class="sep"></span>
    <button class="tb" aria-label="Εκτύπωση"><svg class="ico"><use href="#i-print"/></svg></button>
    <button class="tb" aria-label="Προεπισκόπηση"><svg class="ico"><use href="#i-prev"/></svg></button>
    <span class="sep"></span>
    <button class="tb" aria-label="Ορθογραφία"><svg class="ico"><use href="#i-spell"/></svg></button>
    <button class="tb" aria-label="Έρευνα"><svg class="ico"><use href="#i-res"/></svg></button>
    <span class="sep"></span>
    <button class="tb" aria-label="Αποκοπή"><svg class="ico"><use href="#i-cut"/></svg></button>
    <button class="tb" aria-label="Αντιγραφή"><svg class="ico"><use href="#i-copy"/></svg></button>
    <button class="tb" aria-label="Επικόλληση"><svg class="ico"><use href="#i-paste"/></svg></button>
    <button class="tb" aria-label="Πινέλο μορφοποίησης"><svg class="ico"><use href="#i-brush"/></svg></button>
    <span class="sep"></span>
    <button class="tb" aria-label="Αναίρεση"><svg class="ico"><use href="#i-undo"/></svg></button><button class="arr tri dim" aria-label="Λίστα αναίρεσης"></button>
    <button class="tb" aria-label="Επανάληψη"><svg class="ico"><use href="#i-redo"/></svg></button><button class="arr tri dim" aria-label="Λίστα επανάληψης"></button>
    <span class="sep"></span>
    <button class="tb" aria-label="Υπερ-σύνδεση"><svg class="ico"><use href="#i-link"/></svg></button>
    <button class="tb" aria-label="Πίνακες και περιγράμματα"><svg class="ico"><use href="#i-tbb"/></svg></button>
    <button class="tb" aria-label="Εισαγωγή πίνακα"><svg class="ico"><use href="#i-tbl"/></svg></button>
    <button class="tb" aria-label="Φύλλο Excel"><svg class="ico"><use href="#i-xls"/></svg></button>
    <button class="tb" aria-label="Στήλες"><svg class="ico"><use href="#i-cols"/></svg></button>
    <button class="tb" aria-label="Σχεδίαση"><svg class="ico"><use href="#i-draw"/></svg></button>
    <span class="sep"></span>
    <button class="tb" aria-label="Χάρτης εγγράφου"><svg class="ico"><use href="#i-map"/></svg></button>
    <button class="tb" aria-label="Σημάδια παραγράφου"><svg class="ico"><use href="#i-para"/></svg></button>
    <select class="combo w55" aria-label="Ζουμ"><option>100%</option></select>
    <button class="tb" aria-label="Βοήθεια"><svg class="ico"><use href="#i-help"/></svg></button>
    <span class="sep"></span>
    <button class="tb txt me-1"><svg class="ico"><use href="#i-book"/></svg><span>Ανάγνωσ<u>η</u></span></button>
    <button class="endcap" aria-label="Επιλογές γραμμής εργαλείων"><svg width="8" height="10"><use href="#i-more"/></svg></button>
  </div>
</div>

<div class="toolrow d-flex flex-shrink-0">
  <div class="bar d-flex align-items-center">
    <span class="grip"></span>
    <button class="tb" aria-label="Στυλ και μορφοποίηση"><svg class="ico"><use href="#i-aa"/></svg></button>
    <select class="combo w92" aria-label="Στυλ"><option>Βασικό</option></select>
    <select class="combo w112" aria-label="Γραμματοσειρά"><option>Times New Roman</option></select>
    <select class="combo w38" aria-label="Μέγεθος"><option>12</option></select>
    <span class="sep"></span>
    <button class="tb serif">B</button><button class="tb serif fst-italic">I</button><button class="tb serif text-decoration-underline">U</button>
    <span class="sep"></span>
    <button class="tb on" aria-label="Στοίχιση αριστερά"><svg class="ico"><use href="#i-al"/></svg></button>
    <button class="tb" aria-label="Στο κέντρο"><svg class="ico"><use href="#i-ac"/></svg></button>
    <button class="tb" aria-label="Στοίχιση δεξιά"><svg class="ico"><use href="#i-ar"/></svg></button>
    <button class="tb" aria-label="Πλήρης στοίχιση"><svg class="ico"><use href="#i-aj"/></svg></button>
    <button class="tb" aria-label="Διάστιχο"><svg class="ico"><use href="#i-ls"/></svg></button><button class="arr tri" aria-label="Λίστα διάστιχου"></button>
    <span class="sep"></span>
    <button class="tb" aria-label="Αρίθμηση"><svg class="ico"><use href="#i-num"/></svg></button>
    <button class="tb" aria-label="Κουκκίδες"><svg class="ico"><use href="#i-bul"/></svg></button>
    <button class="tb" aria-label="Μείωση εσοχής"><svg class="ico"><use href="#i-od"/></svg></button>
    <button class="tb" aria-label="Αύξηση εσοχής"><svg class="ico"><use href="#i-in"/></svg></button>
    <span class="sep"></span>
    <button class="tb" aria-label="Περιγράμματα"><svg class="ico"><use href="#i-bord"/></svg></button><button class="arr tri" aria-label="Λίστα περιγραμμάτων"></button>
    <button class="tb" aria-label="Επισήμανση"><svg class="ico"><use href="#i-hl"/></svg></button><button class="arr tri" aria-label="Χρώματα επισήμανσης"></button>
    <button class="tb" aria-label="Χρώμα γραμματοσειράς"><svg class="ico"><use href="#i-fc"/></svg></button><button class="arr tri me-1" aria-label="Χρώματα γραμματοσειράς"></button>
    <button class="endcap" aria-label="Επιλογές γραμμής μορφοποίησης"><svg width="8" height="10"><use href="#i-more"/></svg></button>
  </div>
  <div class="bar d-flex align-items-center">
    <span class="grip"></span>
    <button class="tb" aria-label="Πεδίο κειμένου"><svg class="ico"><use href="#i-ab"/></svg></button>
    <button class="tb" aria-label="Πλαίσιο ελέγχου"><svg class="ico"><use href="#i-ckb"/></svg></button>
    <button class="tb" aria-label="Αναπτυσσόμενο πεδίο"><svg class="ico"><use href="#i-dd"/></svg></button>
    <span class="sep"></span>
    <button class="tb" aria-label="Ιδιότητες"><svg class="ico"><use href="#i-prop"/></svg></button>
    <span class="sep"></span>
    <button class="tb" aria-label="Σχεδίαση πίνακα"><svg class="ico"><use href="#i-tdr"/></svg></button>
    <button class="tb" aria-label="Πίνακας"><svg class="ico"><use href="#i-tbl"/></svg></button>
    <button class="tb" aria-label="Πλαίσιο"><svg class="ico"><use href="#i-frame"/></svg></button>
    <button class="tb on" aria-label="Σκίαση πεδίων"><svg class="ico"><use href="#i-shade"/></svg></button>
    <span class="sep"></span>
    <button class="tb" aria-label="Επαναφορά πεδίων"><svg class="ico"><use href="#i-erase"/></svg></button>
    <button class="tb me-1" aria-label="Προστασία"><svg class="ico"><use href="#i-lock"/></svg></button>
    <button class="endcap" aria-label="Επιλογές φορμών"><svg width="8" height="10"><use href="#i-more"/></svg></button>
  </div>
</div>

<main class="d-flex flex-grow-1 overflow-hidden">
  <section class="docarea d-flex flex-column flex-grow-1">
    <div class="d-flex flex-grow-1 overflow-hidden">
      <div class="d-flex flex-column flex-grow-1 overflow-hidden">
        <div class="ruler d-flex align-items-center flex-shrink-0">
          <button class="tabsel flex-shrink-0" aria-label="Στηλοθέτης"><svg width="14" height="14" class="d-block"><path d="M5 4v6h5" fill="none" stroke="#000" stroke-width="2"/></svg></button>
          <div class="scale d-flex position-relative flex-shrink-0">
            <span>3</span><span>2</span><span>1</span><span></span><span>1</span><span>2</span><span>3</span><span>4</span><span>5</span><span>6</span><span>7</span><span>8</span><span>9</span><span>10</span><span>11</span><span>12</span><span>13</span><span>14</span><span>15</span><span>16</span><span>17</span>
            <svg class="position-absolute mark-l" width="11" height="24"><path d="M1.500 1.500h8v3l-4 4-4-4zM5.500 9.500l4 4v2h-8v-2zM1.500 16.500h8v5h-8z" fill="#ece9d8" stroke="#222"/></svg>
            <svg class="position-absolute mark-r" width="11" height="10"><path d="M5.500 1.500l4 4v3h-8v-3z" fill="#ece9d8" stroke="#222"/></svg>
          </div>
        </div>
        <div class="d-flex flex-grow-1 overflow-hidden">
          <div class="vruler flex-shrink-0">
            <div class="vscale d-flex flex-column"><span class="half"></span><span>1</span><span>2</span><span>3</span><span>4</span><span>5</span><span>6</span><span>7</span><span>8</span><span>9</span><span>10</span><span>11</span><span>12</span><span>13</span><span>14</span><span>15</span><span>16</span><span>17</span><span>18</span><span>19</span><span>20</span><span class="half"></span></div>
          </div>
          <div class="canvas d-flex flex-grow-1"><div class="sheet flex-shrink-0"></div></div>
        </div>
      </div>
      <div class="vscroll d-flex flex-column align-items-center flex-shrink-0">
        <div class="splitter flex-shrink-0"></div>
        <button class="sbtn" aria-label="Επάνω"><svg width="10" height="10"><path d="M1.500 7L5 3.500 8.500 7" fill="none" stroke="#4d6185" stroke-width="2.200"/></svg></button>
        <div class="thumb v w-100 d-flex align-items-center justify-content-center"><svg width="8" height="8"><path d="M0 .500h7M0 2.500h7M0 4.500h7M0 6.500h7" stroke="#8eaae6"/></svg></div>
        <div class="track"></div>
        <button class="sbtn" aria-label="Κάτω"><svg width="10" height="10"><path d="M1.500 3L5 6.500 8.500 3" fill="none" stroke="#4d6185" stroke-width="2.200"/></svg></button>
        <button class="nav-s" aria-label="Προηγούμενη σελίδα"><svg width="8" height="8"><path d="M1.500 4L4 1l2.500 3zM1.500 7L4 4l2.500 3zM1 7.500h6" stroke="#000" stroke-width=".6"/></svg></button>
        <button class="nav-s" aria-label="Επιλογή αντικειμένου"><svg width="8" height="8"><circle cx="4" cy="4" r="3" fill="#bbb" stroke="#111"/></svg></button>
        <button class="nav-s" aria-label="Επόμενη σελίδα"><svg width="8" height="8"><path d="M1.500 4L4 7l2.500-3zM1.500 1L4 4l2.500-3zM1 .500h6" stroke="#000" stroke-width=".6"/></svg></button>
      </div>
    </div>
    <div class="hrow d-flex flex-shrink-0 align-items-center">
      <button class="view" aria-label="Κανονική προβολή"><svg width="10" height="10"><path d="M1 1.500h8M1 4.500h8M1 6.500h8M1 9.500h8" stroke="#000"/></svg></button>
      <button class="view" aria-label="Διάταξη Web"><svg width="10" height="10"><path d="M1.500 1.500h6v5h-6z" fill="#fff" stroke="#000"/><circle cx="7" cy="7" r="2.300" fill="#2f62c0" stroke="#000" stroke-width=".6"/></svg></button>
      <button class="view on" aria-label="Διάταξη εκτύπωσης"><svg width="10" height="10"><path d="M1.500 1.500h7v7h-7z" fill="#fff" stroke="#000"/><path d="M3 4.500h4M3 6.500h4" stroke="#000"/></svg></button>
      <button class="view" aria-label="Διάρθρωση"><svg width="10" height="10"><path d="M1 1.500h5M3 3.500h6M5 5.500h4M3 7.500h6M6 9.500h3" stroke="#333"/></svg></button>
      <button class="view" aria-label="Διάταξη ανάγνωσης"><svg width="10" height="10"><path d="M1 1.500h3l1 1 1-1h3v6H6L5 9 4 7.500H1zM5 2v6M2.500 3v3M7.500 3v3" fill="#fff" stroke="#222"/></svg></button>
      <button class="sbtn" aria-label="Αριστερά"><svg width="10" height="10"><path d="M6.500 1.500L3 5l3.500 3.500" fill="none" stroke="#4d6185" stroke-width="2.200"/></svg></button>
      <div class="thumb h flex-grow-1 h-100 d-flex align-items-center justify-content-center"><svg width="8" height="8"><path d="M.500 0v7M2.500 0v7M4.500 0v7M6.500 0v7" stroke="#8eaae6"/></svg></div>
      <button class="sbtn" aria-label="Δεξιά"><svg width="10" height="10"><path d="M3.500 1.500L7 5 3.500 8.500" fill="none" stroke="#4d6185" stroke-width="2.200"/></svg></button>
    </div>
  </section>

  <aside class="pane">
    <div class="panehead d-flex align-items-center">
      <span class="grip"></span><span class="headtext flex-grow-1">Γρήγορα αποτελέσματα</span>
      <svg width="10" height="6" class="me-2 ms-1"><path d="M0 0h9L4.500 5z"/></svg>
      <svg width="10" height="10"><use href="#i-x"/></svg>
    </div>
    <div class="panenav d-flex align-items-center">
      <svg width="15" height="15" class="flex-shrink-0"><use href="#i-lt"/></svg><span class="sep"></span><svg width="15" height="15" class="flex-shrink-0"><use href="#i-rt"/></svg><span class="sep"></span><svg class="ico"><use href="#i-home"/></svg>
    </div>
    <div class="logo d-flex">
      <svg width="26" height="28" class="flex-shrink-0"><use href="#i-off"/></svg>
      <div class="logotext"><div class="ms">Microsoft</div><div class="d-flex gap-1"><span class="of">Office</span><span class="on">Online</span></div></div>
    </div>
    <div class="sect online">
      <ul class="links bul list-unstyled">
        <li><a href="#">Σύνδεση με το Microsoft Office<br>Online</a></li>
        <li><a href="#">Μάθετε τις πιο πρόσφατες<br>πληροφορίες σχετικά με τη<br>χρήση του Word</a></li>
        <li><a href="#">Αυτόματη ενημέρωση αυτής της<br>λίστας από το Web</a></li>
      </ul>
      <div class="more"><a href="#">Περισσότερα...</a></div>
      <label for="q" class="d-block">Αναζήτηση για:</label>
      <div class="d-flex align-items-center g5 gap7"><input id="q" class="find"><button aria-label="Αναζήτηση"><svg width="18" height="18" class="d-block"><rect width="18" height="18" rx="2" fill="#2f9e3a"/><path d="M3 9h11M9.500 4.500L14 9l-4.500 4.500" fill="none" stroke="#fff" stroke-width="2"/></svg></button></div>
      <div class="d-flex g5"><span class="exlab">Παράδειγμα:</span><span>"Εκτύπωση<br>περισσότερων από ένα<br>αντιγράφων"</span></div>
    </div>
    <div class="opentitle">Άνοιγμα</div>
    <div class="sect recent links">
      <ul class="list-unstyled">
        <li><a href="#">ΑΙΤΗΣΗ ΑΝΑΣΤΑΣΙΑ.doc</a></li>
        <li><a href="#">ΜΕΙΩΣΗ ΩΡΑΡΙΟΥ ΠΥΣΔΕ<br>TZIKAS.doc</a></li>
        <li><a href="#">ΜΕΙΩΣΗ ΩΡΑΡΙΟΥ ΠΥΣΔΕ.doc</a></li>
        <li><a href="#">ΜΕΙΩΣΗ ΩΡΑΡΙΟΥ ΠΥΣΔΕ<br>TZIKAS.doc</a></li>
      </ul>
      <a href="#" class="filelink d-flex align-items-center"><svg class="ico"><use href="#i-open"/></svg>Περισσότερα...</a>
      <a href="#" class="filelink d-flex align-items-center"><svg class="ico"><use href="#i-new"/></svg>Δημιουργία νέου εγγράφου...</a>
    </div>
  </aside>
</main>

<div class="status d-flex flex-shrink-0 align-items-center">
  <div class="cell d-flex w218"><span class="w75">Σελίδα  1</span><span class="w98">Ενότητα  1</span><span>1/1</span></div>
  <div class="cell pos d-flex w176"><span class="w72">Στα  2,5εκ.</span><span class="w48">Γρ.  1</span><span>Στ.  1</span></div>
  <div class="cell off w25">ΕΓΓ</div><div class="cell off w34">ΑΝΑΘ</div><div class="cell off w23">ΕΚΤ</div><div class="cell off w25">ΑΝΤ</div>
  <div class="cell lang">Αγγλικά (Η.</div>
  <div class="cell w44"></div><div class="cell w37"></div><div class="cell w27"></div><div class="cell w29"></div>
</div>

<footer class="taskbar d-flex flex-shrink-0 align-items-center">
  <button class="start d-flex align-items-center text-white"><svg width="22" height="20" class="flex-shrink-0"><use href="#i-flag"/></svg>έναρξη</button>
  <div class="quick d-flex">
    <button class="tb" aria-label="Επιφάνεια εργασίας"><svg class="ico"><use href="#i-desk"/></svg></button>
    <button class="tb" aria-label="Firefox"><svg class="ico"><use href="#i-ff"/></svg></button>
    <button class="tb" aria-label="Internet Explorer"><svg class="ico"><use href="#i-ie"/></svg></button>
    <button class="tb" aria-label="Σημειώσεις"><svg class="ico"><use href="#i-pen"/></svg></button>
    <button class="tb" aria-label="Media Player"><svg class="ico"><use href="#i-wmp"/></svg></button>
    <button class="tb" aria-label="Picasa"><svg class="ico"><use href="#i-pic"/></svg></button>
    <button class="tb" aria-label="Chrome"><svg class="ico"><use href="#i-chr"/></svg></button>
    <button class="tb" aria-label="Internet Explorer"><svg class="ico"><use href="#i-ie"/></svg></button>
  </div>
  <div class="tasks d-flex flex-grow-1">
    <button class="task w157 d-flex align-items-center"><svg class="ico"><use href="#i-ppt"/></svg>Microsoft PowerPoint ...</button>
    <button class="task on w160 d-flex align-items-center"><svg class="ico"><use href="#i-word"/></svg>Έγγραφο1 - Microsof...</button>
  </div>
  <span class="lang-ind">EN</span>
  <div class="tray d-flex align-items-center align-self-stretch">
    <svg class="ico"><use href="#i-usb"/></svg><svg class="ico"><use href="#i-av"/></svg><svg class="ico"><use href="#i-ccs"/></svg><svg class="ico"><use href="#i-net"/></svg><svg class="ico"><use href="#i-nv"/></svg><svg class="ico"><use href="#i-vol"/></svg><svg class="ico"><use href="#i-plug"/></svg>
    <span class="clock text-nowrap">8:42 πμ</span>
  </div>
</footer>

<div class="dlg position-absolute start-50 translate-middle-x" role="dialog" aria-labelledby="dt">
  <div class="dlghead d-flex align-items-center">
    <span id="dt" class="cap-title flex-grow-1">Επιλογές</span>
    <button class="winbtn help" aria-label="Βοήθεια"><svg width="19" height="19" class="d-block"><path d="M6 7c0-4.500 7-4 6.500-.5C12.200 8.500 9.300 8.500 9.300 11M9.300 13v2.500" fill="none" stroke="#fff" stroke-width="2"/></svg></button>
    <button class="winbtn close-red" aria-label="Κλείσιμο"><svg width="19" height="19" class="d-block"><path d="M4.500 4.500l10 10M14.500 4.500l-10 10" stroke="#fff" stroke-width="2.200"/></svg></button>
  </div>
  <div class="tabs back d-flex">
    <button class="tab f190">Παρακολούθηση αλλαγών</button><button class="tab f142">Στοιχεία χρήστη</button><button class="tab f129">Συμβατότητα</button><button class="tab f136">Θέσεις αρχείων</button>
  </div>
  <div class="tabs d-flex">
    <button class="tab f67">Προβολή</button><button class="tab f62">Γενικά</button><button class="tab f84">Επεξεργασία</button><button class="tab f74">Εκτύπωση</button><button class="tab f84">Αποθήκευση</button><button class="tab on f76">Ασφάλεια</button><button class="tab f149">Ορθογραφία &amp; γραμματική</button>
  </div>
  <div class="panel">
    <h2 class="lg">Επιλογές κρυπτογράφησης αρχείου για αυτό το έγγραφο</h2>
    <div class="fld d-flex g6 align-items-start"><label class="lab" for="p1">Κω<u>δ</u>ικός πρόσβασης για άνοιγμα:</label><input id="p1" type="password" class="pw"><button class="xp w123 ms-auto"><u>Γ</u>ια προχωρημένους...</button></div>
    <h2 class="lg">Επιλογές κοινής χρήσης αρχείου για αυτό το έγγραφο</h2>
    <div class="fld d-flex g6"><label class="lab" for="p2">Κ<u>ω</u>δικός πρόσβασης για τροποποίηση:</label><input id="p2" type="password" class="pw"></div>
    <div class="ckrow first"><input type="checkbox" class="ck" id="c1"><label for="c1">Συνιστάται μόνο για ανάγνωσ<u>η</u></label></div>
    <div class="btnpair d-flex g6"><button class="xp w131"><u>Ψ</u>ηφιακές υπογραφές...</button><button class="xp w178"><u>Π</u>ροστασία εγγράφου...</button></div>
    <h2 class="lg far">Επιλογές απορρήτου</h2>
    <div class="ckrow"><input type="checkbox" class="ck" id="c2"><label for="c2"><u>Κ</u>ατάργηση προσωπικών πληροφοριών από τις ιδιότητες αρχείου κατά την αποθήκευση</label></div>
    <div class="ckrow"><input type="checkbox" class="ck" id="c3"><label for="c3">Π<u>ρ</u>οειδοποίηση πριν από την εκτύπωση, αποθήκευση ή αποστολή ενός αρχείου που περιέχει εντοπισμένες αλλαγές<br>ή σχόλια</label></div>
    <div class="ckrow"><input type="checkbox" class="ck" id="c4" checked><label for="c4">Απο<u>θ</u>ήκευση τυχαίου αριθμού για βελτίωση της ακρίβειας συγχώνευσης</label></div>
    <div class="ckrow"><input type="checkbox" class="ck" id="c5" checked><label for="c5">Η σήμανση να είναι <u>ο</u>ρατή κατά το άνοιγμα ή την αποθήκευση</label></div>
    <h2 class="lg">Ασφάλεια μακροεντολών</h2>
    <div class="fld d-flex g6 align-items-start"><p class="mb-0">Ρύθμιση του επιπέδου ασφαλείας για το άνοιγμα αρχείων που πιθανόν να περιέχουν<br>ιούς μακροεντολών και καθορισμός των ονομάτων αξιόπιστων κατασκευαστών<br>μακροεντολών.</p><button class="xp w149 ms-auto flex-shrink-0">Ασφάλεια <u>μ</u>ακροεντολών...</button></div>
  </div>
  <div class="dlgfoot d-flex justify-content-end"><button class="xp def w72">ΟΚ</button><button class="xp w72">Άκυρο</button></div>
</div>

<script src="https://cdn.jsdelivr.net/npm/bootstrap@5.3.0/dist/js/bootstrap.bundle.min.js"></script>
</body>
</html>
